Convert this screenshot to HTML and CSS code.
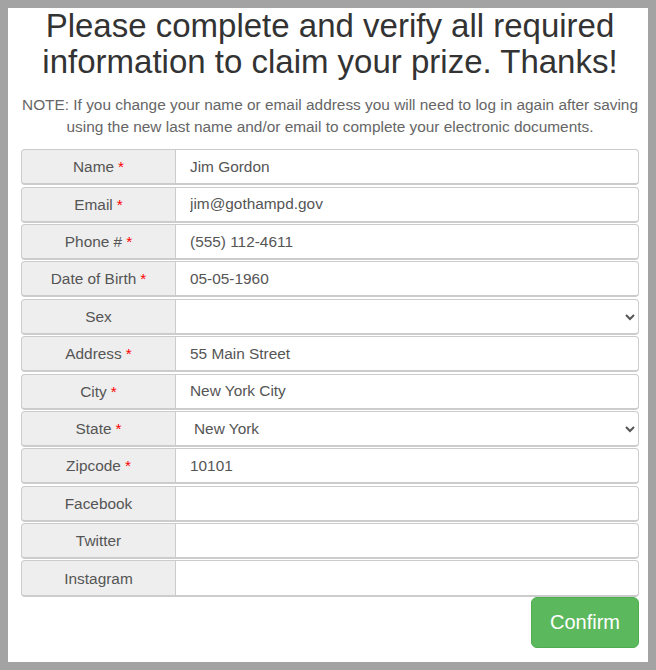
FILE: index.html
```html
<!DOCTYPE html>
<html lang="en">
<head>
<meta charset="utf-8">
<title>Claim your prize</title>
<link rel="stylesheet" href="styles.css">
</head>
<body>
<main class="panel">
  <h1 class="title">Please complete and verify all required<br>information to claim your prize. Thanks!</h1>
  <p class="note">NOTE: If you change your name or email address you will need to log in again after saving<br>using the new last name and/or email to complete your electronic documents.</p>
  <form class="form">
    <div class="rows">
      <div class="row"><label class="addon">Name <span class="req">*</span></label><input class="field" type="text" value="Jim Gordon"></div>
      <div class="row"><label class="addon">Email <span class="req">*</span></label><input class="field" type="text" value="jim@gothampd.gov"></div>
      <div class="row"><label class="addon">Phone # <span class="req">*</span></label><input class="field" type="text" value="(555) 112-4611"></div>
      <div class="row"><label class="addon">Date of Birth <span class="req">*</span></label><input class="field" type="text" value="05-05-1960"></div>
      <div class="row"><label class="addon">Sex</label><select class="field select"><option></option><option>Male</option><option>Female</option></select></div>
      <div class="row"><label class="addon">Address <span class="req">*</span></label><input class="field" type="text" value="55 Main Street"></div>
      <div class="row"><label class="addon">City <span class="req">*</span></label><input class="field" type="text" value="New York City"></div>
      <div class="row"><label class="addon">State <span class="req">*</span></label><select class="field select"><option selected>New York</option><option>New Jersey</option></select></div>
      <div class="row"><label class="addon">Zipcode <span class="req">*</span></label><input class="field" type="text" value="10101"></div>
      <div class="row"><label class="addon">Facebook</label><input class="field" type="text" value=""></div>
      <div class="row"><label class="addon">Twitter</label><input class="field" type="text" value=""></div>
      <div class="row"><label class="addon">Instagram</label><input class="field" type="text" value=""></div>
    </div>
    <div class="actions"><button class="btn-confirm" type="button">Confirm</button></div>
  </form>
</main>
</body>
</html>
```

FILE: styles.css
```css
html {
  background: #a3a3a3;
}
body {
  margin: 8px;
  background: #ffffff;
  min-height: 654px;
  box-sizing: border-box;
  padding: 0 9px 0 13px;
  font-family: "Liberation Sans", Arial, sans-serif;
  color: #333333;
}
.panel {
  display: flex;
  flex-direction: column;
}
.title {
  margin: 0;
  font-size: 33px;
  font-weight: normal;
  line-height: 1.1;
  text-align: center;
  color: #333333;
}
.note {
  margin: 13px 0 0;
  font-size: 15.4px;
  line-height: 22px;
  text-align: center;
  color: #666666;
}
.form {
  margin-top: 11.6px;
  display: flex;
  flex-direction: column;
}
.rows {
  display: flex;
  flex-direction: column;
  gap: 1.3px;
}
.row {
  display: flex;
  height: 36.1px;
}
.addon {
  width: 155px;
  flex: none;
  box-sizing: border-box;
  display: flex;
  align-items: center;
  justify-content: center;
  padding-top: 1px;
  background: #eeeeee;
  border: 1px solid #cccccc;
  border-bottom-width: 2px;
  border-radius: 4px 0 0 4px;
  font-size: 15.4px;
  line-height: 22px;
  color: #555555;
}
.req {
  color: #ff0000;
  margin-left: 4px;
}
.field {
  flex: 1;
  min-width: 0;
  box-sizing: border-box;
  height: 36.1px;
  margin: 0;
  padding: 0 14px;
  background: #ffffff;
  border: 1px solid #cccccc;
  border-left: 0;
  border-bottom-width: 2px;
  border-radius: 0 4px 4px 0;
  font-family: "Liberation Sans", Arial, sans-serif;
  font-size: 15.4px;
  color: #555555;
  outline: none;
}
.select {
  padding-left: 14px;
  padding-right: 8px;
}
.actions {
  display: flex;
  justify-content: flex-end;
  margin-top: 0.5px;
}
.btn-confirm {
  box-sizing: border-box;
  height: 51px;
  padding: 0 18px;
  background: #5cb85c;
  border: 1px solid #4cae4c;
  border-radius: 6px;
  color: #ffffff;
  font-family: "Liberation Sans", Arial, sans-serif;
  font-size: 20px;
  line-height: 27px;
  cursor: pointer;
}
```
